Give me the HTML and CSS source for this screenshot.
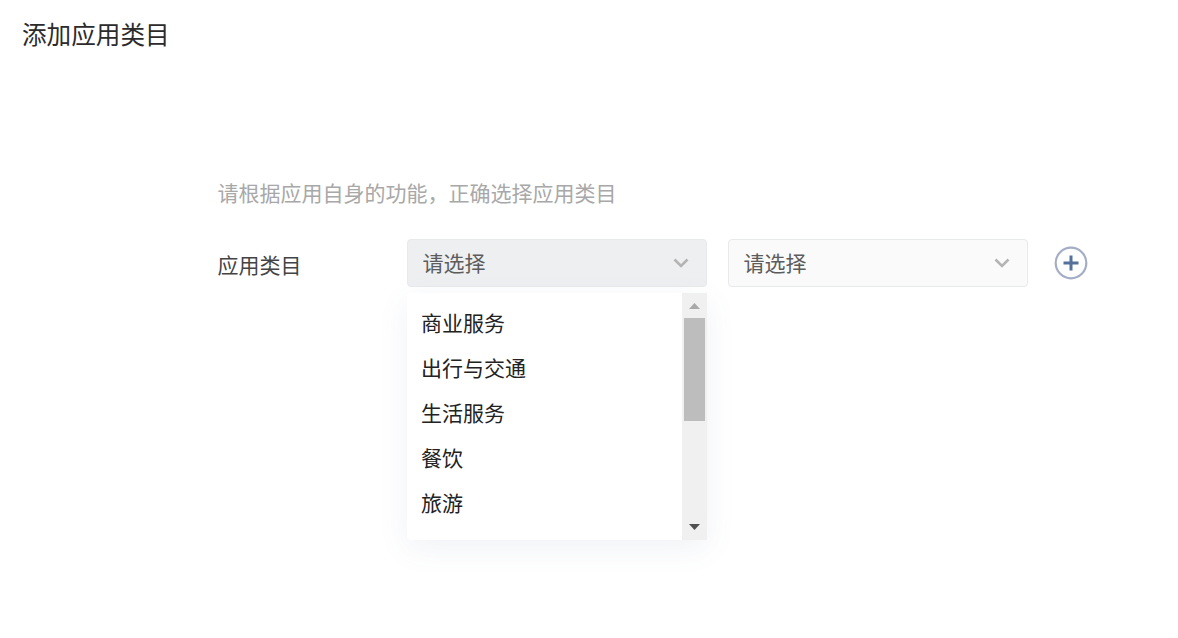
FILE: index.html
```html
<!DOCTYPE html>
<html lang="zh-CN">
<head>
    <meta charset="UTF-8">
    <meta name="viewport" content="width=device-width, initial-scale=1.0">
    <title>添加应用类目</title>
    <link rel="stylesheet" href="styles.css">
</head>
<body>
    <h1 class="page-title">添加应用类目</h1>
    <div class="form-area">
        <p class="hint">请根据应用自身的功能，正确选择应用类目</p>
        <div class="form-row">
            <label class="form-label">应用类目</label>
            <div class="select-wrap">
                <div class="select select-open">
                    <span>请选择</span>
                    <svg class="chevron" width="16" height="10" viewBox="0 0 16 10"><path d="M1.5 1.5 L8 8 L14.5 1.5" fill="none" stroke="#b4b4b4" stroke-width="2.6"/></svg>
                </div>
                <div class="category-list">
                    <ul class="option-list">
                        <li>商业服务</li>
                        <li>出行与交通</li>
                        <li>生活服务</li>
                        <li>餐饮</li>
                        <li>旅游</li>
                    </ul>
                    <div class="scroll-rail">
                        <svg class="arrow" width="11" height="6" viewBox="0 0 11 6"><path d="M5.5 0 L11 6 L0 6 Z" fill="#a9a9a9"/></svg>
                        <div class="thumb-track"><div class="thumb"></div></div>
                        <svg class="arrow" width="11" height="6" viewBox="0 0 11 6"><path d="M0 0 L11 0 L5.5 6 Z" fill="#505050"/></svg>
                    </div>
                </div>
            </div>
            <div class="select">
                <span>请选择</span>
                <svg class="chevron" width="16" height="10" viewBox="0 0 16 10"><path d="M1.5 1.5 L8 8 L14.5 1.5" fill="none" stroke="#b4b4b4" stroke-width="2.6"/></svg>
            </div>
            <svg class="add-btn" width="34" height="34" viewBox="0 0 34 34">
                <circle cx="17" cy="17" r="15.3" fill="none" stroke="#a3aec6" stroke-width="2.2"/>
                <path d="M9.5 17 H24.5 M17 9.5 V24.5" stroke="#54709b" stroke-width="3"/>
            </svg>
        </div>
    </div>
</body>
</html>
```

FILE: styles.css
```css
body {
    margin: 0;
    min-height: 100vh;
    background: #fff;
    font-family: "Noto Sans CJK SC", "Liberation Sans", sans-serif;
    color: #222;
}
.page-title {
    margin: 0;
    padding: 16px 0 0 22px;
    font-size: 24.6px;
    line-height: 34px;
    font-weight: 400;
    color: #2b2b2b;
}
.form-area {
    padding: 127px 0 0 217.5px;
}
.hint {
    margin: 0 0 32px;
    font-size: 21px;
    line-height: 30px;
    color: #a8a8a8;
}
.form-row {
    display: flex;
    align-items: flex-start;
}
.form-label {
    width: 189.5px;
    font-size: 21px;
    line-height: 51px;
    color: #444;
}
.select-wrap {
    margin-right: 21px;
}
.select {
    display: flex;
    justify-content: space-between;
    align-items: center;
    box-sizing: border-box;
    width: 300px;
    height: 48px;
    padding: 0 17px 2px 14.5px;
    border: 1px solid #e8e9ec;
    border-radius: 4px;
    background: #fafafa;
    font-size: 21px;
    color: #5c5c5c;
}
.select-open {
    background: #eeeff1;
}
.chevron {
    margin-top: 2px;
}
.add-btn {
    margin: 7px 0 0 26px;
}
.category-list {
    display: flex;
    width: 300px;
    height: 247px;
    margin-top: 6px;
    background: #fff;
    border-radius: 4px 0 0 4px;
    box-shadow: 0 8px 30px rgba(90, 110, 150, 0.09);
}
.option-list {
    flex: 1;
    margin: 0;
    padding: 7px 0 0 14px;
    list-style: none;
    font-size: 21px;
    line-height: 45px;
    color: #222;
}
.scroll-rail {
    display: flex;
    flex-direction: column;
    align-items: center;
    box-sizing: border-box;
    width: 25px;
    padding: 10px 0;
    background: #f0f0f0;
}
.thumb-track {
    flex: 1;
    width: 21px;
    padding-top: 9px;
}
.thumb {
    height: 103px;
    background: #bdbdbd;
}
```
